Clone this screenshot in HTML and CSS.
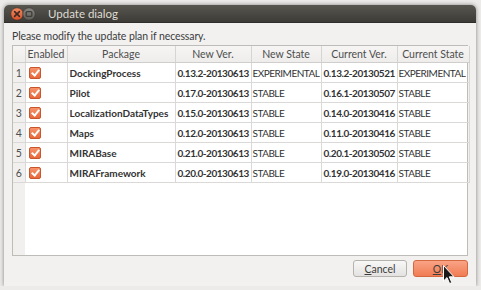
FILE: index.html
```html
<!DOCTYPE html>
<html lang="en">
<head>
    <meta charset="UTF-8" />
    <title>Update dialog</title>
    <link rel="stylesheet" href="styles.css">
</head>
<body>

<div class="window">
    <!-- Title bar -->
    <div class="titlebar">
        <svg class="wm-buttons" width="32" height="14" viewBox="0 0 32 14">
            <defs>
                <linearGradient id="closeGrad" x1="0" y1="0" x2="0" y2="1">
                    <stop offset="0" stop-color="#f28a61"/>
                    <stop offset="1" stop-color="#d8512a"/>
                </linearGradient>
                <linearGradient id="minGrad" x1="0" y1="0" x2="0" y2="1">
                    <stop offset="0" stop-color="#8a8882"/>
                    <stop offset="1" stop-color="#5e5c57"/>
                </linearGradient>
            </defs>
            <circle cx="7" cy="7" r="6.2" fill="url(#closeGrad)" stroke="#3a2a22" stroke-width="0.6"/>
            <path d="M4.6 4.6 L9.4 9.4 M9.4 4.6 L4.6 9.4" stroke="#3b2a22" stroke-width="1.6" stroke-linecap="round"/>
            <circle cx="19" cy="7" r="6.2" fill="url(#minGrad)" stroke="#34332f" stroke-width="0.6"/>
            <rect x="16.2" y="4.6" width="5.6" height="4.8" rx="1" fill="none" stroke="#3f3e3a" stroke-width="1.4"/>
        </svg>
        <span class="title">Update dialog</span>
    </div>

    <div class="content">
        <p class="hint">Please modify the update plan if necessary.</p>

        <!-- Package table -->
        <div class="view">
            <table class="plan">
                <colgroup>
                    <col style="width: 12px">
                    <col style="width: 42px">
                    <col style="width: 108px">
                    <col style="width: 76px">
                    <col style="width: 70px">
                    <col style="width: 76px">
                    <col style="width: 72px">
                </colgroup>
                <thead>
                    <tr>
                        <th class="corner"></th>
                        <th>Enabled</th>
                        <th>Package</th>
                        <th>New Ver.</th>
                        <th>New State</th>
                        <th>Current Ver.</th>
                        <th>Current State</th>
                    </tr>
                </thead>
                <tbody>
                    <tr>
                        <td class="num">1</td>
                        <td><span class="check"></span></td>
                        <td class="name">DockingProcess</td>
                        <td class="ver">0.13.2-20130613</td>
                        <td class="state">EXPERIMENTAL</td>
                        <td class="ver">0.13.2-20130521</td>
                        <td class="state">EXPERIMENTAL</td>
                    </tr>
                    <tr>
                        <td class="num">2</td>
                        <td><span class="check"></span></td>
                        <td class="name">Pilot</td>
                        <td class="ver">0.17.0-20130613</td>
                        <td class="state">STABLE</td>
                        <td class="ver">0.16.1-20130507</td>
                        <td class="state">STABLE</td>
                    </tr>
                    <tr>
                        <td class="num">3</td>
                        <td><span class="check"></span></td>
                        <td class="name">LocalizationDataTypes</td>
                        <td class="ver">0.15.0-20130613</td>
                        <td class="state">STABLE</td>
                        <td class="ver">0.14.0-20130416</td>
                        <td class="state">STABLE</td>
                    </tr>
                    <tr>
                        <td class="num">4</td>
                        <td><span class="check"></span></td>
                        <td class="name">Maps</td>
                        <td class="ver">0.12.0-20130613</td>
                        <td class="state">STABLE</td>
                        <td class="ver">0.11.0-20130416</td>
                        <td class="state">STABLE</td>
                    </tr>
                    <tr>
                        <td class="num">5</td>
                        <td><span class="check"></span></td>
                        <td class="name">MIRABase</td>
                        <td class="ver">0.21.0-20130613</td>
                        <td class="state">STABLE</td>
                        <td class="ver">0.20.1-20130502</td>
                        <td class="state">STABLE</td>
                    </tr>
                    <tr>
                        <td class="num">6</td>
                        <td><span class="check"></span></td>
                        <td class="name">MIRAFramework</td>
                        <td class="ver">0.20.0-20130613</td>
                        <td class="state">STABLE</td>
                        <td class="ver">0.19.0-20130416</td>
                        <td class="state">STABLE</td>
                    </tr>
                </tbody>
            </table>
        </div>

        <!-- Dialog buttons -->
        <div class="buttons">
            <button class="btn"><u>C</u>ancel</button>
            <button class="btn btn-ok"><u>O</u>K</button>
        </div>
    </div>
</div>

<!-- Mouse pointer over OK -->
<svg class="cursor" width="12" height="21" viewBox="0 0 12 21">
    <path d="M0.5 0.5 L0.5 16 L4 12.6 L6.6 18.6 L8.8 17.6 L6.3 11.8 L11 11.8 Z" fill="#1a1a1a" stroke="#ffffff" stroke-width="1"/>
</svg>

</body>
</html>
```

FILE: styles.css
```css
body {
    margin: 0;
    background-color: #ecebe9;
    font-family: 'Lato', 'DejaVu Sans', sans-serif;
    font-size: 10.5px;
    color: #3c3c3c;
}
.window {
    position: relative;
    margin: 5px 0 0 4px;
    width: 472px;
    height: 281px;
    background-color: #f2f1f0;
    border-radius: 5px 5px 0 0;
    box-shadow: 0 0 4px rgba(0,0,0,0.45);
}
.titlebar {
    height: 18px;
    display: flex;
    align-items: center;
    background: linear-gradient(to bottom, #57564f, #3c3b37);
    border-radius: 5px 5px 0 0;
    border-bottom: 1px solid #2f2e2b;
    box-sizing: border-box;
}
.wm-buttons {
    margin-left: 6px;
}
.title {
    margin-left: 6px;
    color: #dfdbd2;
    font-size: 11.5px;
}
.content {
    padding: 6px 8px 0 8px;
}
.hint {
    margin: 0 0 2px 0;
    line-height: 14px;
    color: #3c3c3c;
    letter-spacing: -0.1px;
}
.view {
    height: 211px;
    box-sizing: border-box;
    border: 1px solid #bdbcb9;
    background: linear-gradient(to right, #f1f0ef 12px, #ffffff 12px);
}
.plan {
    table-layout: fixed;
    border-collapse: collapse;
    width: 455px;
}
.plan th {
    height: 16px;
    padding: 0;
    font-weight: normal;
    color: #4e4e4e;
    background: linear-gradient(to bottom, #f6f5f4, #eeedec);
    border-right: 1px solid #d6d5d3;
    border-bottom: 1px solid #cfcecc;
    text-align: center;
    white-space: nowrap;
    overflow: hidden;
}
.plan td {
    height: 19px;
    padding: 0 0 0 2px;
    border-right: 1px solid #dad9d7;
    border-bottom: 1px solid #dad9d7;
    white-space: nowrap;
    overflow: hidden;
    color: #333;
}
.plan td.num {
    padding: 0;
    text-align: center;
    background-color: #f1f0ef;
    color: #4e4e4e;
}
.plan td.name {
    font-weight: bold;
    font-size: 10px;
}
.plan td.ver {
    font-weight: bold;
    font-size: 10px;
    letter-spacing: -0.45px;
}
.plan td.state {
    padding-left: 1px;
    font-size: 10px;
    letter-spacing: -0.5px;
}
.check {
    display: block;
    width: 10px;
    height: 10px;
    margin-left: 1px;
    border-radius: 2px;
    border: 1px solid #c8562c;
    background: linear-gradient(to bottom, #f7936a, #e8683b);
    position: relative;
}
.check::after {
    content: "";
    position: absolute;
    left: 3px;
    top: 0px;
    width: 3px;
    height: 6px;
    border-right: 2px solid #fff;
    border-bottom: 2px solid #fff;
    transform: rotate(40deg);
}
.buttons {
    display: flex;
    justify-content: flex-end;
    gap: 6px;
    margin-top: 4px;
}
.btn {
    height: 17px;
    padding: 0;
    font-family: 'Lato', 'DejaVu Sans', sans-serif;
    font-size: 10.5px;
    color: #3c3c3c;
    border: 1px solid #b5b3ae;
    border-radius: 3px;
    background: linear-gradient(to bottom, #f8f8f7, #e3e2e0);
    width: 54px;
}
.btn-ok {
    width: 55px;
    border-color: #d3683f;
    background: linear-gradient(to bottom, #f9a386, #f07c53);
}
.cursor {
    position: absolute;
    left: 443px;
    top: 265px;
}
```
